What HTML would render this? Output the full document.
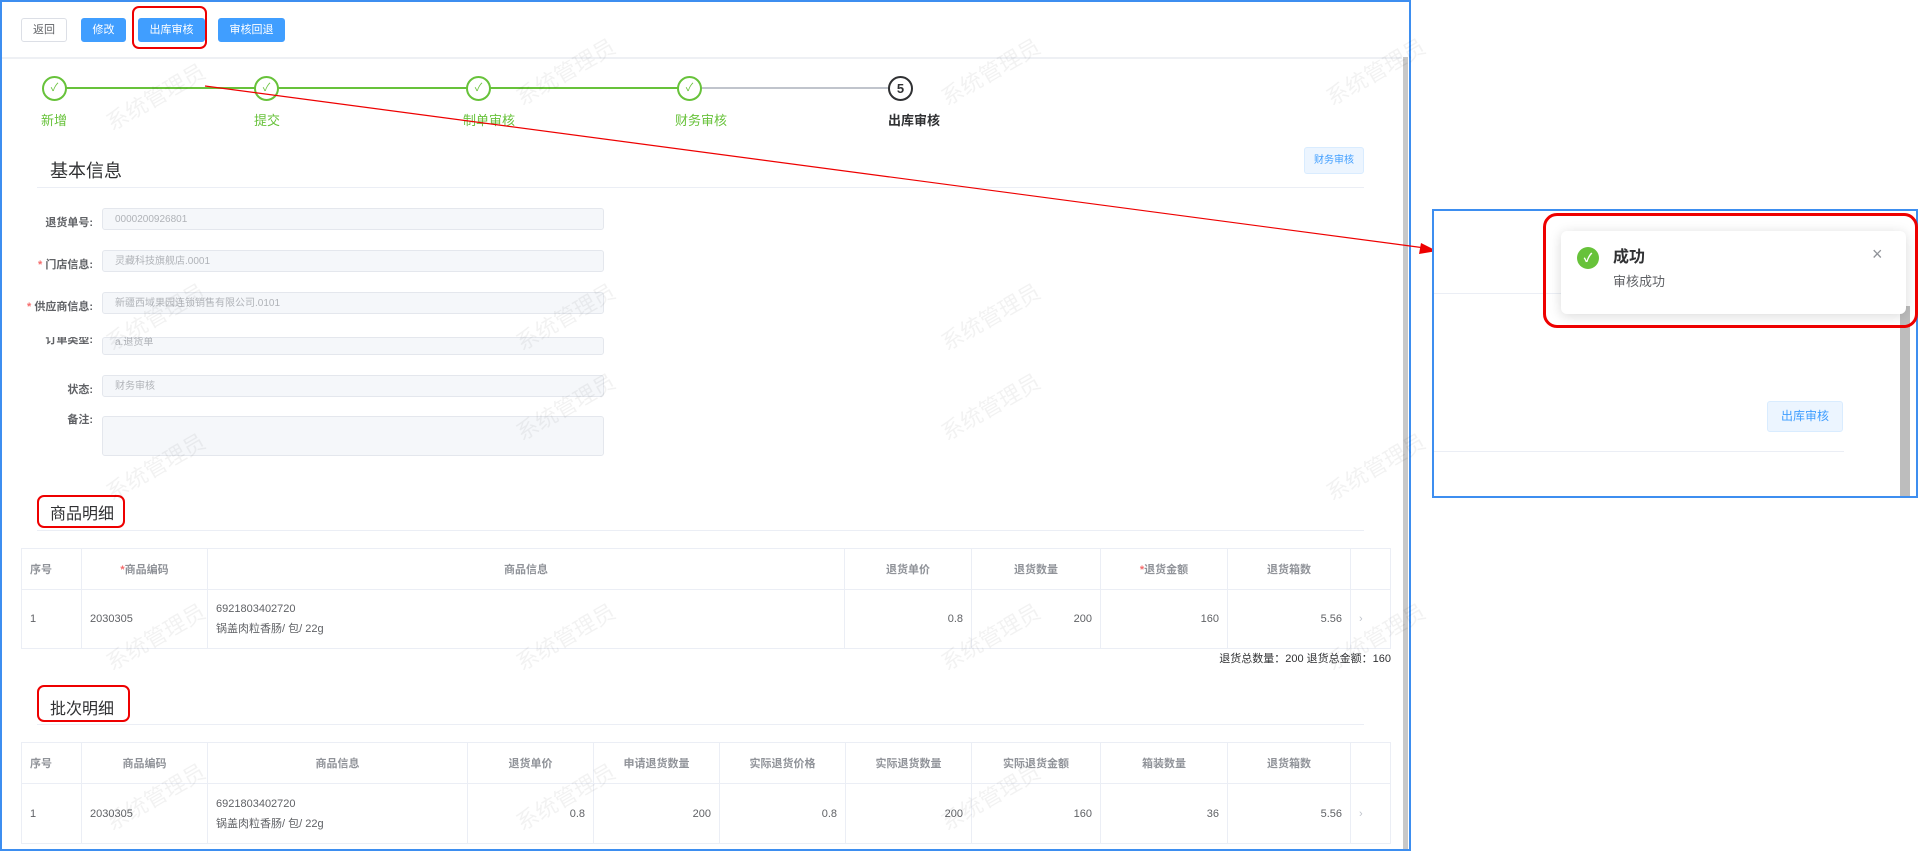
<!DOCTYPE html>
<html><head><meta charset="utf-8"><style>
*{box-sizing:border-box;margin:0;padding:0}
body{width:1918px;height:851px;position:relative;background:#fff;font-family:"Liberation Sans","Noto Sans CJK SC",sans-serif;overflow:hidden;color:#606266}
.a{position:absolute}
.btn{position:absolute;top:18px;height:24px;font-size:11px;line-height:22px;text-align:center;border-radius:3px;color:#fff;background:#409eff;border:1px solid #409eff}
.circ{position:absolute;top:76px;width:25px;height:25px;border-radius:50%;border:2px solid #67c23a;background:#fff;color:#67c23a;font-size:11px;text-align:center;line-height:21px}
.lab{position:absolute;top:110px;font-size:13px;color:#67c23a}
.fl{position:absolute;right:1825px;font-size:11px;color:#606266;white-space:nowrap;font-weight:bold}
.in{position:absolute;left:102px;width:502px;height:22px;background:#f5f7fa;border:1px solid #e4e7ed;border-radius:3px;font-size:10px;color:#b0b3b8;line-height:22px;padding-left:12px}
table{position:absolute;left:21px;width:1370px;border-collapse:collapse;font-size:11px}
td,th{border:1px solid #ebeef5;padding:0 8px}
th{font-weight:bold;color:#909399;height:41px;background:#fff}
td{color:#606266;line-height:20px}
.r{text-align:right}
.wm{position:absolute;font-size:22px;color:rgba(0,0,0,0.05);transform:rotate(-30deg);white-space:nowrap}
.red{position:absolute;border:2px solid #e00;border-radius:7px}
.sec{position:absolute;font-size:16px;color:#303133}
.hl{position:absolute;height:1px;background:#ebeef5}
</style></head><body>
<div class="a" style="left:0;top:0;width:1411px;height:851px;border:2px solid #3d8ef0"></div>
<div class="a" style="left:1403px;top:57px;width:5px;height:792px;background:#c8c8c8"></div>

<div class="btn" style="left:21px;width:46px;background:#fff;color:#606266;border-color:#dcdfe6">返回</div>
<div class="btn" style="left:81px;width:45px">修改</div>
<div class="btn" style="left:138px;width:67px">出库审核</div>
<div class="btn" style="left:218px;width:67px">审核回退</div>
<div class="red" style="left:132px;top:6px;width:75px;height:43px"></div>
<div class="hl" style="left:2px;top:57px;width:1400px;background:#eef0f4;height:2px"></div>

<div class="a" style="left:66px;top:87px;width:624px;height:2px;background:#67c23a"></div>
<div class="a" style="left:690px;top:87px;width:210px;height:2px;background:#c0c4cc"></div>
<div class="circ" style="left:42px">✓</div>
<div class="circ" style="left:254px">✓</div>
<div class="circ" style="left:466px">✓</div>
<div class="circ" style="left:677px">✓</div>
<div class="circ" style="left:888px;border-color:#303133;color:#303133;font-weight:bold;font-size:13px">5</div>
<div class="lab" style="left:41px">新增</div>
<div class="lab" style="left:254px">提交</div>
<div class="lab" style="left:463px">制单审核</div>
<div class="lab" style="left:675px">财务审核</div>
<div class="lab" style="left:888px;color:#303133;font-weight:bold">出库审核</div>

<div class="sec" style="left:50px;top:157px;font-size:18px">基本信息</div>
<div class="hl" style="left:37px;top:187px;width:1327px"></div>
<div class="a" style="left:1304px;top:147px;width:60px;height:27px;background:#ecf5ff;border:1px solid #d9ecff;border-radius:3px;font-size:10px;color:#409eff;text-align:center;line-height:25px">财务审核</div>

<div class="fl" style="top:214px">退货单号:</div><div class="in" style="top:208px">0000200926801</div>
<div class="fl" style="top:256px"><span style="color:#f56c6c">* </span>门店信息:</div><div class="in" style="top:250px">灵藏科技旗舰店.0001</div>
<div class="fl" style="top:298px"><span style="color:#f56c6c">* </span>供应商信息:</div><div class="in" style="top:292px">新疆西域果园连锁销售有限公司.0101</div>
<div class="a" style="left:0;top:337px;width:610px;height:18px;overflow:hidden">
 <div class="a" style="left:0;top:-6px;width:93px;text-align:right;font-size:11px;font-weight:bold;white-space:nowrap">订单类型:</div>
 <div class="in" style="top:0;height:18px;line-height:10px">a.退货单</div></div>
<div class="fl" style="top:381px">状态:</div><div class="in" style="top:375px">财务审核</div>
<div class="fl" style="top:411px">备注:</div><div class="in" style="top:416px;height:40px"></div>

<div class="sec" style="left:50px;top:500px">商品明细</div>
<div class="red" style="left:37px;top:495px;width:88px;height:33px"></div>
<div class="hl" style="left:37px;top:530px;width:1327px"></div>
<table style="top:548px">
<tr><th style="width:60px;text-align:left">序号</th><th style="width:126px"><span style="color:#f56c6c">*</span>商品编码</th><th>商品信息</th><th style="width:127px">退货单价</th><th style="width:129px">退货数量</th><th style="width:127px"><span style="color:#f56c6c">*</span>退货金额</th><th style="width:123px">退货箱数</th><th style="width:40px"></th></tr>
<tr style="height:59px"><td>1</td><td>2030305</td><td>6921803402720<br>锅盖肉粒香肠/ 包/ 22g</td><td class="r">0.8</td><td class="r">200</td><td class="r">160</td><td class="r">5.56</td><td style="color:#c0c4cc">›</td></tr>
</table>
<div class="a" style="right:527px;top:650px;font-size:11px;color:#303133">退货总数量：200 退货总金额：160</div>

<div class="sec" style="left:50px;top:695px">批次明细</div>
<div class="red" style="left:37px;top:685px;width:93px;height:37px"></div>
<div class="hl" style="left:37px;top:724px;width:1327px"></div>
<table style="top:742px">
<tr><th style="width:60px;text-align:left">序号</th><th style="width:126px">商品编码</th><th>商品信息</th><th style="width:126px">退货单价</th><th style="width:126px">申请退货数量</th><th style="width:126px">实际退货价格</th><th style="width:126px">实际退货数量</th><th style="width:129px">实际退货金额</th><th style="width:127px">箱装数量</th><th style="width:123px">退货箱数</th><th style="width:40px"></th></tr>
<tr style="height:60px"><td>1</td><td>2030305</td><td>6921803402720<br>锅盖肉粒香肠/ 包/ 22g</td><td class="r">0.8</td><td class="r">200</td><td class="r">0.8</td><td class="r">200</td><td class="r">160</td><td class="r">36</td><td class="r">5.56</td><td style="color:#c0c4cc">›</td></tr>
</table>

<div class="wm" style="left:100px;top:80px">系统管理员</div>
<div class="wm" style="left:510px;top:55px">系统管理员</div>
<div class="wm" style="left:935px;top:55px">系统管理员</div>
<div class="wm" style="left:1320px;top:55px">系统管理员</div>
<div class="wm" style="left:100px;top:300px">系统管理员</div>
<div class="wm" style="left:510px;top:300px">系统管理员</div>
<div class="wm" style="left:935px;top:300px">系统管理员</div>
<div class="wm" style="left:510px;top:390px">系统管理员</div>
<div class="wm" style="left:935px;top:390px">系统管理员</div>
<div class="wm" style="left:100px;top:450px">系统管理员</div>
<div class="wm" style="left:1320px;top:450px">系统管理员</div>
<div class="wm" style="left:100px;top:620px">系统管理员</div>
<div class="wm" style="left:510px;top:620px">系统管理员</div>
<div class="wm" style="left:935px;top:620px">系统管理员</div>
<div class="wm" style="left:1320px;top:620px">系统管理员</div>
<div class="wm" style="left:100px;top:780px">系统管理员</div>
<div class="wm" style="left:510px;top:780px">系统管理员</div>
<div class="wm" style="left:935px;top:780px">系统管理员</div>

<svg class="a" style="left:0;top:0" width="1918" height="851"><line x1="205" y1="86" x2="1425" y2="248" stroke="#e00" stroke-width="1.2"/><polygon points="1437,251 1421,243 1419,254" fill="#e00"/></svg>

<div class="a" style="left:1432px;top:209px;width:486px;height:289px;border:2px solid #3d8ef0;background:#fff;overflow:hidden">
 <div class="a" style="left:0;top:82px;width:470px;height:1px;background:#ebeef5"></div>
 <div class="a" style="left:0;top:240px;width:410px;height:1px;background:#ebeef5"></div>
 <div class="a" style="left:466px;top:95px;width:10px;height:200px;background:#bdbdbd"></div>
 <div class="a" style="left:333px;top:190px;width:76px;height:31px;background:#ecf5ff;border:1px solid #d9ecff;border-radius:3px;color:#409eff;font-size:12px;text-align:center;line-height:29px">出库审核</div>
 <div class="a" style="left:127px;top:20px;width:345px;height:83px;background:#fff;border-radius:6px;box-shadow:0 2px 12px rgba(0,0,0,0.15)">
  <div class="a" style="left:16px;top:16px;width:22px;height:22px;border-radius:50%;background:#67c23a;color:#fff;font-size:12px;text-align:center;line-height:22px;font-weight:bold">✓</div>
  <div class="a" style="left:52px;top:12px;font-size:16px;font-weight:bold;color:#303133">成功</div>
  <div class="a" style="left:52px;top:40px;font-size:13px;color:#606266">审核成功</div>
  <div class="a" style="left:311px;top:13px;font-size:18px;color:#909399">×</div>
 </div>
</div>
<div class="red" style="left:1543px;top:213px;width:375px;height:115px;border-radius:14px;border-width:3px"></div>
</body></html>
